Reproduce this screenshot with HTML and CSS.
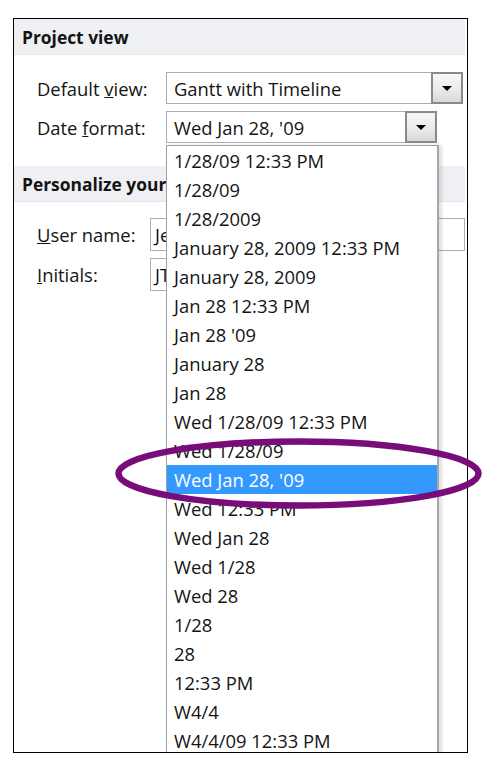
FILE: index.html
```html
<!DOCTYPE html>
<html>
<head>
<meta charset="utf-8">
<link rel="stylesheet" href="styles.css">
</head>
<body>
<div class="stage">
  <div class="frame">
    <div class="section-head">Project view</div>
    <div class="form form-view">
      <div class="row">
        <span class="label">Default <u>v</u>iew:</span>
        <div class="combo combo-wide">
          <span class="combo-text">Gantt with Timeline</span>
          <span class="combo-btn"><span class="tri"></span></span>
        </div>
      </div>
      <div class="row">
        <span class="label">Date <u>f</u>ormat:</span>
        <div class="combo combo-date">
          <span class="combo-text">Wed Jan 28, '09</span>
          <span class="combo-btn"><span class="tri"></span></span>
        </div>
      </div>
    </div>
    <div class="section-head section-head-2">Personalize your copy of Microsoft Office</div>
    <div class="form form-user">
      <div class="row">
        <span class="label label-user"><u>U</u>ser name:</span>
        <div class="textbox tb-name">Jessica Thompson</div>
      </div>
      <div class="row">
        <span class="label label-user"><u>I</u>nitials:</span>
        <div class="textbox tb-init">JT</div>
      </div>
    </div>
    <ul class="dropdown">
      <li>1/28/09 12:33 PM</li>
      <li>1/28/09</li>
      <li>1/28/2009</li>
      <li>January 28, 2009 12:33 PM</li>
      <li>January 28, 2009</li>
      <li>Jan 28 12:33 PM</li>
      <li>Jan 28 '09</li>
      <li>January 28</li>
      <li>Jan 28</li>
      <li>Wed 1/28/09 12:33 PM</li>
      <li>Wed 1/28/09</li>
      <li class="selected">Wed Jan 28, '09</li>
      <li>Wed 12:33 PM</li>
      <li>Wed Jan 28</li>
      <li>Wed 1/28</li>
      <li>Wed 28</li>
      <li>1/28</li>
      <li>28</li>
      <li>12:33 PM</li>
      <li>W4/4</li>
      <li>W4/4/09 12:33 PM</li>
    </ul>
  </div>
  <svg class="callout" width="489" height="775" viewBox="0 0 489 775">
    <ellipse cx="298.5" cy="473.5" rx="180" ry="32" fill="none" stroke="#780c78" stroke-width="6.5"/>
  </svg>
</div>
</body>
</html>
```

FILE: styles.css
```css
html, body {
  margin: 0;
  padding: 0;
  background: #ffffff;
}

.stage {
  position: relative;
  width: 489px;
  height: 775px;
  overflow: hidden;
  font-family: "Open Sans", "Noto Sans", "DejaVu Sans", sans-serif;
  font-size: 18.4px;
  color: #141414;
}

.frame {
  position: relative;
  margin: 18px 0 0 13px;
  width: 455px;
  height: 735px;
  box-sizing: border-box;
  border: 1px solid #000;
  overflow: hidden;
  background: #fff;
}

.section-head {
  height: 36px;
  line-height: 36px;
  margin-right: 2px;
  padding-left: 8px;
  background: #eef0f3;
  box-shadow: inset 0 -1px 0 #e4e6ea;
  font-weight: 700;
  font-size: 17.4px;
  white-space: nowrap;
  overflow: hidden;
}

.section-head-2 {
  margin-top: 23px;
}

.form {
  display: flex;
  flex-direction: column;
  gap: 7px;
  padding-left: 23px;
}

.form-view {
  padding-top: 17px;
}

.form-user {
  padding-top: 16px;
}

.row {
  display: flex;
  align-items: center;
}

.label {
  width: 129px;
  flex: none;
  white-space: nowrap;
}

.label-user {
  width: 113px;
}

.combo {
  display: flex;
  align-items: stretch;
  height: 32px;
  box-sizing: border-box;
  border: 1px solid #abadb3;
  background: #fff;
}

.combo-wide {
  width: 297px;
}

.combo-date {
  width: 271px;
}

.combo-text {
  flex: 1;
  display: flex;
  align-items: center;
  padding-left: 7px;
  white-space: nowrap;
}

.combo-btn {
  width: 32px;
  flex: none;
  box-sizing: border-box;
  margin: -1px -1px -1px 0;
  border: 2px solid #8a8a8a;
  background: linear-gradient(#f7f7f7, #ececec 50%, #d9d9d9);
  display: flex;
  align-items: center;
  justify-content: center;
}

.tri {
  width: 0;
  height: 0;
  border-left: 5px solid transparent;
  border-right: 5px solid transparent;
  border-top: 5px solid #000;
  margin-top: 1px;
}

.textbox {
  height: 33px;
  box-sizing: border-box;
  border: 1px solid #abadb3;
  display: flex;
  align-items: center;
  padding-left: 4px;
  white-space: nowrap;
  overflow: hidden;
}

.tb-name {
  width: 315px;
}

.tb-init {
  width: 90px;
}

.dropdown {
  position: absolute;
  left: 152px;
  top: 126px;
  width: 273px;
  margin: 0;
  padding: 0;
  list-style: none;
  box-sizing: border-box;
  border: 1px solid #a0a0a0;
  border-right: 2px solid #a8a8ab;
  background: #fff;
  box-shadow: 3px 0 3px rgba(0, 0, 0, 0.12);
}

.dropdown li {
  height: 29px;
  line-height: 29px;
  padding-left: 7px;
  white-space: nowrap;
}

.dropdown li.selected {
  background: #3399ff;
  color: #fff;
}

.callout {
  position: absolute;
  left: 0;
  top: 0;
  pointer-events: none;
}
```
